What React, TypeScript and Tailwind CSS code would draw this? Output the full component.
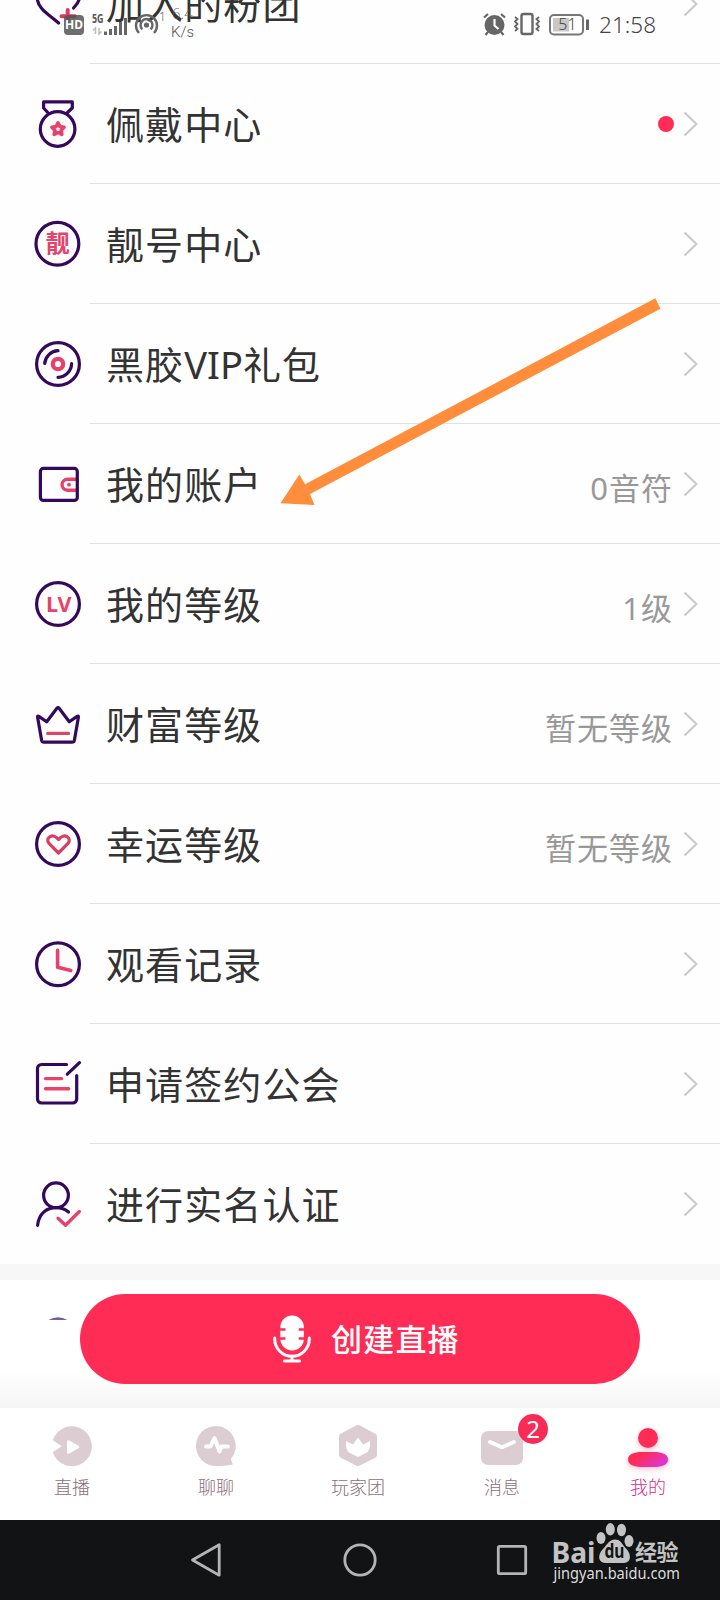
import type { ReactNode } from "react";

const PURPLE = "#34085c";
const PINK = "#e8416a";

type Row = {
  label: ReactNode;
  icon: ReactNode;
  value?: string;
  dot?: boolean;
};

function Ring({ cx = 24, cy = 24 }: { cx?: number; cy?: number }) {
  return <circle cx={cx} cy={cy} r="21.4" stroke={PURPLE} />;
}

const rows: Row[] = [
  {
    label: "加入的粉团",
    icon: (
      <>
        <path d="M24.6 43C14 34 3.2 28 3.2 17.5 3.2 4 20 1 24.4 11 29 1 45.500 4 45.500 17.500 45.200 21.500 42.500 25 39.600 28" stroke={PURPLE} />
        <path d="M27.500 36.200h13.400M33.700 30v11.800" stroke="#dc3a62" strokeWidth="4" />
      </>
    ),
  },
  {
    label: "佩戴中心",
    dot: true,
    icon: (
      <>
        <path d="M13.800 12.500 9.600 8V1.900h28.700V8l-4.800 4.500" stroke={PURPLE} />
        <circle cx="23.600" cy="29" r="17.300" stroke={PURPLE} />
        <path
          d="m24 22.800 1.900 3.700 4.200.7-3 3 .7 4.200-3.800-1.900-3.800 1.900.7-4.200-3-3 4.200-.7z"
          stroke={PINK}
          strokeWidth="3.600"
        />
      </>
    ),
  },
  {
    label: "靓号中心",
    icon: (
      <>
        <Ring cx={23.4} cy={23.7} />
        <text x="23.700" y="32.300" textAnchor="middle" fontSize="24" fontWeight="700" fill={PINK} stroke="none">
          靓
        </text>
      </>
    ),
  },
  {
    label: (
      <>
        黑胶<span className="tracking-normal">VIP</span>礼包
      </>
    ),
    icon: (
      <>
        <Ring />
        <circle cx="24" cy="24" r="5.200" stroke={PINK} strokeWidth="4.200" />
        <path d="M10.700 23.500A14 14 0 0 1 24 10.700M37.600 23.500A14 14 0 0 1 24 37.300" stroke={PURPLE} />
      </>
    ),
  },
  {
    label: "我的账户",
    value: "0音符",
    icon: (
      <>
        <path d="M43 19.300h-9.500a5.400 5.400 0 0 0 0 10.900H43" stroke={PINK} strokeWidth="3.400" strokeLinecap="butt" />
        <circle cx="35" cy="24.700" r="1.900" fill={PINK} stroke="none" />
        <rect x="6.400" y="8.400" width="36.900" height="32" rx="3" stroke={PURPLE} />
      </>
    ),
  },
  {
    label: "我的等级",
    value: "1级",
    icon: (
      <>
        <Ring />
        <text x="24.800" y="31.500" textAnchor="middle" fontSize="21.500" fontWeight="700" fill={PINK} stroke="none">
          LV
        </text>
      </>
    ),
  },
  {
    label: "财富等级",
    value: "暂无等级",
    icon: (
      <>
        <path d="M3.600 17.200q-.3-1.700 1.300-.8l7.800 5.300L22.900 8.200q1.100-1.400 2.200 0l10.200 13.500 7.800-5.300q1.600-.9 1.300.8l-4 23q-.4 2-2.400 2H10q-2 0-2.400-2z" stroke={PURPLE} />
        <path d="M13.800 33.400h20.700" stroke="#dc4565" strokeWidth="3.400" />
      </>
    ),
  },
  {
    label: "幸运等级",
    value: "暂无等级",
    icon: (
      <>
        <Ring />
        <path d="M24.500 33 15 23.400c-4.500-5.500 4-11.500 9.500-3.800 5.500-7.700 14-1.700 9.500 3.800z" stroke="#d93f62" strokeWidth="3.200" />
      </>
    ),
  },
  {
    label: "观看记录",
    icon: (
      <>
        <Ring cy={24.3} />
        <path d="M23.600 10.300v16.900l13.200 3.400" stroke={PINK} strokeWidth="3.600" />
      </>
    ),
  },
  {
    label: "申请签约公会",
    icon: (
      <>
        <path d="M32.600 4.500H7.500a4 4 0 0 0-4 4V39a4 4 0 0 0 4 4h31.200a4 4 0 0 0 4-4V15.500" stroke={PURPLE} />
        <path d="M45.500 2.600 33.300 14.200" stroke={PURPLE} />
        <path d="M11.500 18.600h16M11.500 28.700h23.200" stroke={PINK} strokeWidth="3.400" />
      </>
    ),
  },
  {
    label: "进行实名认证",
    icon: (
      <>
        <circle cx="22" cy="15.300" r="12.400" stroke={PURPLE} />
        <path d="M3.600 45.300C5 33 13 27.700 22 27.700c5 0 9.300 1.500 12.500 4.300" stroke={PURPLE} />
        <path d="m24 38.200 7.500 7L45.300 31.500" stroke={PINK} strokeWidth="3.400" />
      </>
    ),
  },
];

function Chevron() {
  return (
    <svg width="16" height="26" viewBox="0 0 16 26" fill="none" stroke="#c8c8c8" strokeWidth="2">
      <path d="m1.500 1.500 12 11.500-12 11.500" />
    </svg>
  );
}

function MenuRow({ row, last }: { row: Row; last: boolean }) {
  return (
    <div className="flex h-[120px] shrink-0 pl-[34px]">
      <svg
        className="mt-9 shrink-0"
        width="48"
        height="48"
        viewBox="0 0 48 48"
        fill="none"
        strokeWidth="3.200"
        strokeLinecap="round"
        strokeLinejoin="round"
      >
        {row.icon}
      </svg>
      <div
        className={`ml-2 flex flex-1 items-center border-b pl-4 pr-[21px] ${last ? "border-transparent" : "border-[#e1e1e1]"}`}
      >
        <span className="flex-1 whitespace-nowrap text-[38px] leading-none tracking-[1.1px] text-[#333]">{row.label}</span>
        {row.value && (
          <span className="mr-[10px] mt-[9px] text-[31px] leading-none tracking-[1px] text-[#999]">{row.value}</span>
        )}
        {row.dot && <span className="mr-[9px] size-4 rounded-full bg-[#ff2d55]" />}
        <Chevron />
      </div>
    </div>
  );
}

function StatusBar() {
  return (
    <div className="absolute inset-x-0 top-0 flex h-12 text-[#666]">
      <div className="ml-16 mt-[15px] flex size-5 items-center justify-center rounded-[4px] bg-[#555]/85 text-[12px] font-bold leading-none text-white">
        HD
      </div>
      <svg className="ml-2" width="67" height="40" viewBox="92 0 67 40" fill="none">
        <text x="92" y="22.500" fontSize="12.500" fontWeight="700" textLength="11.500" lengthAdjust="spacingAndGlyphs" fill="#555">
          5G
        </text>
        <path d="M95.500 34v-6l-2.500 2.500M99 28v6l2.500-2.500" stroke="#bbb" strokeWidth="1.500" />
        <path d="M105.500 31.500V35M110.500 29v6M115.500 26v9M120.500 22v13M125.500 18v17" stroke="#666" strokeWidth="3" />
        <g stroke="#666" strokeWidth="2.400">
          <path d="M139 33a10.500 10.500 0 1 1 15 0" />
          <path d="M142.300 29.300a6 6 0 1 1 8.400 0" />
        </g>
        <circle cx="146.500" cy="25" r="2.600" fill="#666" />
      </svg>
      <span className="mt-[10px] w-[7px] text-[12px] font-light leading-[14px]">1</span>
      <div className="ml-[5px] w-[30px] text-[15px] font-light leading-none text-[#555]">
        <div className="mt-[6px] pl-px opacity-70">6.4</div>
        <div className="mt-1 font-['Roboto']">K/s</div>
      </div>
      <svg className="ml-auto mr-[7px]" width="110" height="40" viewBox="482 0 110 40" fill="none">
        <circle cx="494.500" cy="25" r="10" fill="#666" />
        <path d="m484 17.500 4-3.500M505 17.500l-4-3.500M488 32l-2.500 3M501 32l2.500 3" stroke="#666" strokeWidth="2.200" />
        <path d="M494.500 19v6.500l4 3.500" stroke="#fff" strokeWidth="2.200" />
        <rect x="521.500" y="14" width="11" height="20" rx="2" stroke="#666" strokeWidth="2.400" />
        <path
          d="m515 17 2.500 2-2.500 2.500 2.500 2.500-2.500 2.500 2.500 2.500-2.500 2M539 17l-2.500 2 2.500 2.500-2.500 2.500 2.500 2.500-2.500 2.500 2.500 2"
          stroke="#666"
          strokeWidth="1.800"
        />
        <rect x="550" y="15" width="33" height="19.500" rx="4" stroke="#777" strokeWidth="2" />
        <rect x="553" y="18" width="16" height="13.500" fill="#c8c8c8" />
        <path d="M587.500 19.500v10.500" stroke="#666" strokeWidth="3" />
        <text x="567.500" y="30.300" textAnchor="middle" fontSize="16" fontWeight="300" fill="#444">
          51
        </text>
      </svg>
      <span className="mr-[64px] mt-[13px] text-[22.500px] font-light leading-6 text-[#444]">21:58</span>
    </div>
  );
}

function PointerArrow() {
  return (
    <svg className="pointer-events-none absolute left-[270px] top-[290px]" width="400" height="225" viewBox="270 290 400 225">
      <path d="M655.300 298.300 660.500 308.700 310 494 314.500 505 280.500 503.200 299.300 474.500 305 484.300z" fill="#ff8d3c" />
    </svg>
  );
}

function MicIcon() {
  return (
    <svg width="38" height="48" viewBox="0 0 38 48" fill="none">
      <rect x="7.300" y=".5" width="23.600" height="35" rx="11.800" fill="#fff" />
      <path d="M6.500 14.500h6M6.500 23.500h6M25.700 14.500h6M25.700 23.500h6" stroke="#ff2d55" strokeWidth="2.600" />
      <path d="M1.700 23v1a17.300 17.300 0 0 0 34.600 0v-1M19 41v4.500M11.500 46h15" stroke="#fff" strokeWidth="3" strokeLinecap="round" />
    </svg>
  );
}

const tabs = [
  {
    label: "直播",
    icon: (
      <>
        <path d="M2.800 14.300a20 20 0 1 1 0 11.900l8.900-5.900z" fill="#dccdd3" />
        <path d="M18.500 15.800v10.400l9.300-5.200z" fill="#fff" stroke="#fff" strokeWidth="3" strokeLinejoin="round" />
      </>
    ),
  },
  {
    label: "聊聊",
    icon: (
      <>
        <path d="M22 0a20 20 0 1 0 0 40c6 0 11 0 17-1.500Q37 35 37 33A20 20 0 0 0 22 0" fill="#dccdd3" />
        <path d="M12 20.500h4.500L20.500 12l5 13.500 2-5H34" stroke="#fff" strokeWidth="4" strokeLinecap="round" strokeLinejoin="round" />
      </>
    ),
  },
  {
    label: "玩家团",
    cell: "pr-1",
    icon: (
      <>
        <path d="M22 2 38 10.500v18.500L22 37.200 6 29V10.500z" fill="#dccdd3" stroke="#dccdd3" strokeWidth="6" strokeLinejoin="round" />
        <path d="m10 15 7 3.500 5-7 5 7 7-3.500q.5 10-4 12l-8 4-8-4q-4.500-2-4-12" fill="#fff" />
      </>
    ),
  },
  {
    label: "消息",
    cell: "pr-1",
    badge: 2,
    icon: (
      <>
        <rect x="1" y="5" width="42" height="34" rx="7" fill="#dccdd3" />
        <path d="m10 16 12 5.200L34 16" stroke="#fff" strokeWidth="3.800" strokeLinecap="round" strokeLinejoin="round" />
      </>
    ),
  },
  {
    label: "我的",
    active: true,
    icon: (
      <>
        <defs>
          <linearGradient id="mine" x1="0" x2="1" y1="0" y2=".5">
            <stop offset=".35" stopColor="#ff2d55" />
            <stop offset="1" stopColor="#dc35cf" />
          </linearGradient>
        </defs>
        <g className="drop-shadow-[0_2px_3px_rgba(255,45,85,0.3)]">
          <circle cx="22" cy="12" r="10" fill="#ff2d55" />
          <path d="M2 33.500C2 28 8 26 16 26h12c8 0 14 2 14 7.500S36 41 28 41H16C8 41 2 39 2 33.500" fill="url(#mine)" />
        </g>
      </>
    ),
  },
];

function TabBar() {
  return (
    <div className="grid h-28 shrink-0 grid-cols-5 bg-white">
      {tabs.map((t) => (
        <div key={t.label} className={`relative flex flex-col items-center pt-[18px] ${t.cell ?? ""}`}>
          <svg className="overflow-visible" width="44" height="40" viewBox="0 0 44 40" fill="none">
            {t.icon}
          </svg>
          <span
            className={`mt-3 text-[18px] font-light leading-[18px] ${t.active ? "text-[#d92d8c]" : "text-[#8d6d78]"}`}
          >
            {t.label}
          </span>
          {t.badge && (
            <span className="absolute left-[86px] top-[6px] flex size-[30px] items-center justify-center rounded-full bg-[#f92c55] text-[24px] leading-none text-white">
              {t.badge}
            </span>
          )}
        </div>
      ))}
    </div>
  );
}

function Watermark() {
  return (
    <svg className="absolute left-[550px] top-0" width="140" height="70" viewBox="550 1520 140 70" fill="#c3c3c3">
      <text x="551.500" y="1562.500" fontSize="28.500" fontWeight="700" textLength="44" lengthAdjust="spacingAndGlyphs">
        Bai
      </text>
      <ellipse cx="601" cy="1538" rx="4.500" ry="6" />
      <ellipse cx="610.300" cy="1529.300" rx="4.500" ry="6.200" />
      <ellipse cx="621.500" cy="1530" rx="4.500" ry="6.200" />
      <ellipse cx="629" cy="1541" rx="4.500" ry="6" />
      <path d="M615 1539.500c6 0 7 5 11 9 6 6 5 14.500-2 14.500h-18c-8 0-9-8-3-14 4-4 6-9.500 12-9.500" />
      <text x="604.500" y="1558" fontSize="19" fontWeight="700" fill="#111315" textLength="20" lengthAdjust="spacingAndGlyphs">
        du
      </text>
      <text x="635" y="1560" fontSize="22" fontWeight="700" textLength="43.500">
        经验
      </text>
      <text x="553.500" y="1579" fontSize="15.500" fill="#dcdcdc" textLength="126.500" lengthAdjust="spacingAndGlyphs">
        jingyan.baidu.com
      </text>
    </svg>
  );
}

function SystemNav() {
  return (
    <div className="relative flex h-20 shrink-0 items-center justify-center gap-[117px] bg-[#111315]">
      <svg width="36" height="36" viewBox="0 0 36 36" fill="none" stroke="#b4b4b4" strokeWidth="2.800" strokeLinejoin="round">
        <path d="M30.200 2.800v30.400L3.500 18z" />
      </svg>
      <svg width="36" height="36" viewBox="0 0 36 36" fill="none" stroke="#b4b4b4" strokeWidth="2.800">
        <circle cx="18" cy="18" r="15.200" />
      </svg>
      <svg width="36" height="36" viewBox="0 0 36 36" fill="none" stroke="#b4b4b4" strokeWidth="2.800">
        <rect x="3.300" y="4.300" width="27.400" height="27.400" rx="1.500" />
      </svg>
      <Watermark />
    </div>
  );
}

export default function App() {
  return (
    <div className="relative flex h-[1600px] w-[720px] flex-col overflow-hidden bg-[#fefefe] font-['Noto_Sans','Noto_Sans_CJK_SC',sans-serif]">
      <div className="-mt-14 flex shrink-0 flex-col">
        {rows.map((row, i) => (
          <MenuRow key={i} row={row} last={i === rows.length - 1} />
        ))}
      </div>

      <div className="h-4 shrink-0 bg-[#f7f7f7]" />

      <div className="relative flex h-32 shrink-0 justify-center bg-linear-to-b from-white from-70% to-[#f6f6f6] pt-[14px]">
        {/* top edge of the next row's icon, hidden behind the button layer */}
        <svg className="absolute left-12 top-[37px]" width="20" height="3" viewBox="0 0 20 3">
          <path d="M.500 3Q10-2.500 19.500 3z" fill="#71609a" />
        </svg>
        <button className="flex h-[90px] w-[560px] items-center rounded-full bg-[#ff2d55] pl-[193px] text-white">
          <MicIcon />
          <span className="ml-5 text-[31px] font-medium leading-none tracking-[1.200px]">创建直播</span>
        </button>
      </div>

      <TabBar />
      <SystemNav />
      <PointerArrow />
      <StatusBar />
    </div>
  );
}
